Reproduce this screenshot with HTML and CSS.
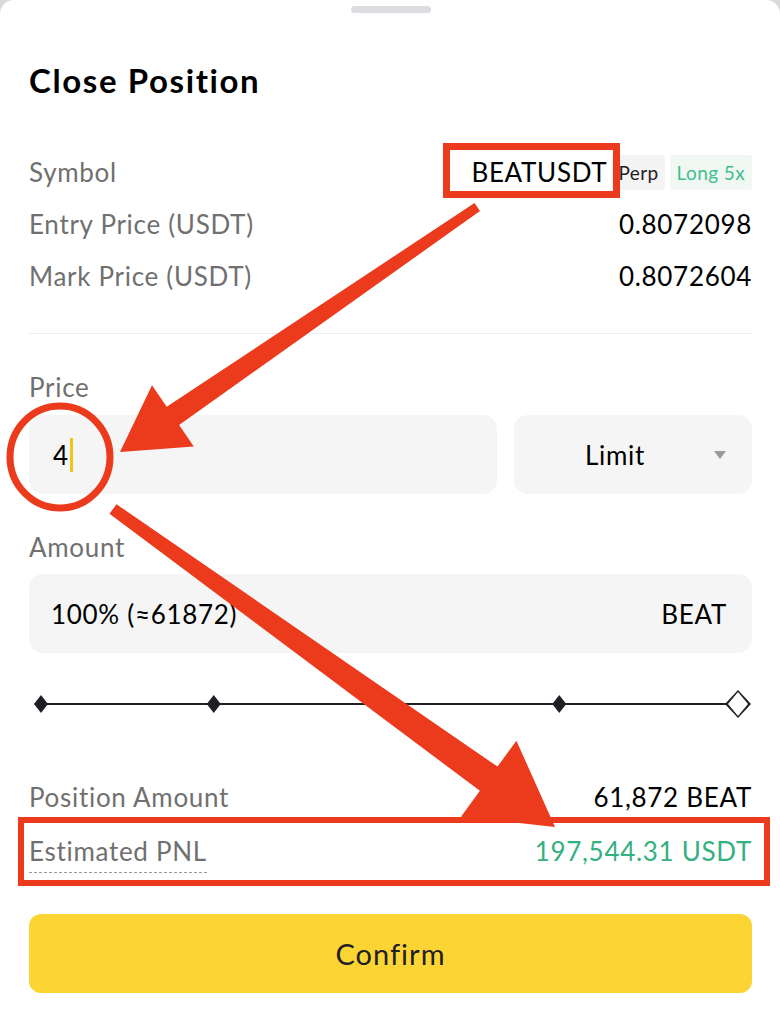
FILE: index.html
```html
<!DOCTYPE html>
<html lang="en">
<head>
  <meta charset="UTF-8">
  <title>Close Position</title>
  <link rel="stylesheet" href="styles.css">
</head>
<body>
  <div class="sheet">
    <div class="grabber"></div>
    <h1 class="title">Close Position</h1>

    <div class="row">
      <span class="label">Symbol</span>
      <span class="symbol">
        <span class="value">BEATUSDT</span>
        <span class="tag">Perp</span>
        <span class="tag tag-long">Long 5x</span>
      </span>
    </div>
    <div class="row">
      <span class="label">Entry Price (USDT)</span>
      <span class="value">0.8072098</span>
    </div>
    <div class="row">
      <span class="label">Mark Price (USDT)</span>
      <span class="value">0.8072604</span>
    </div>

    <div class="divider"></div>

    <div class="field-label">Price</div>
    <div class="price-row">
      <div class="input price-input">
        <span class="value">4</span><span class="caret"></span>
      </div>
      <div class="input select">
        <span class="value">Limit</span>
        <span class="arrow-down"></span>
      </div>
    </div>

    <div class="field-label">Amount</div>
    <div class="input amount-input">
      <span class="value">100% (≈61872)</span>
      <span class="value">BEAT</span>
    </div>

    <div class="slider">
      <div class="track"></div>
      <span class="mark"></span>
      <span class="mark"></span>
      <span class="mark"></span>
      <span class="mark"></span>
      <span class="mark mark-end"></span>
    </div>

    <div class="summary">
      <div class="row">
        <span class="label">Position Amount</span>
        <span class="value">61,872 BEAT</span>
      </div>
      <div class="row">
        <span class="label label-dotted">Estimated PNL</span>
        <span class="value value-green">197,544.31 USDT</span>
      </div>
    </div>

    <button class="confirm">Confirm</button>

    <!-- annotation layer drawn over the screenshot -->
    <svg class="marks" width="780" height="1024" viewBox="0 0 780 1024">
      <rect x="446.5" y="146.5" width="170" height="48" fill="none" stroke="#eb3b1c" stroke-width="7"/>
      <ellipse cx="60" cy="457" rx="50" ry="51" fill="none" stroke="#eb3b1c" stroke-width="7"/>
      <rect x="21" y="820" width="746" height="63" fill="none" stroke="#eb3b1c" stroke-width="6"/>
      <polygon fill="#eb3b1c" points="474.5,203 166.7,406.8 152,385.3 120,452 193.8,446.5 179.1,425 480,211"/>
      <polygon fill="#eb3b1c" points="116.5,504.2 497.5,766.6 516.4,740.7 555,827 461,816.7 479.9,790.8 109.5,513.8"/>
    </svg>
  </div>
</body>
</html>
```

FILE: styles.css
```css
body {
  margin: 0;
  background: #d9d9d9;
  font-family: 'Lato', 'Liberation Sans', sans-serif;
  color: #1e2026;
}

.sheet {
  position: relative;
  width: 780px;
  height: 1024px;
  box-sizing: border-box;
  padding: 0 28px 0 29px;
  background: #fff;
  border-radius: 14px 14px 0 0;
  overflow: hidden;
}

.grabber {
  width: 80px;
  height: 7px;
  margin: 6px auto 0;
  background: #dcdde0;
  border-radius: 4px;
}

.title {
  margin: 41px 0 0;
  height: 52px;
  line-height: 52px;
  font-size: 33px;
  font-weight: 700;
  letter-spacing: 1.6px;
  color: #000;
}

.row {
  display: flex;
  justify-content: space-between;
  align-items: center;
  height: 52px;
}

.title + .row {
  margin-top: 40px;
}

.label {
  font-size: 26px;
  letter-spacing: 0.7px;
  color: #707070;
}

.value {
  font-size: 26px;
  letter-spacing: 0.7px;
  color: #000;
}

.symbol {
  display: flex;
  align-items: center;
}

.symbol .value {
  margin-right: 5px;
}

.tag {
  display: inline-block;
  height: 35px;
  line-height: 35px;
  padding: 0 6px;
  font-size: 19px;
  letter-spacing: 0.4px;
  background: #f4f4f4;
  border-radius: 3px;
  color: #1e2026;
}

.tag-long {
  margin-left: 5px;
  padding: 0 7px;
  color: #3fbf8f;
  background: #f1f8f4;
}

.divider {
  height: 1px;
  margin-top: 31px;
  background: #ececec;
}

.field-label {
  height: 36px;
  line-height: 36px;
  margin-top: 35px;
  font-size: 26px;
  letter-spacing: 0.7px;
  color: #707070;
}

.field-label + .input {
  margin-top: 9px;
}

.price-row {
  display: flex;
  gap: 17px;
  margin-top: 10px;
}

.input {
  display: flex;
  align-items: center;
  height: 79px;
  box-sizing: border-box;
  background: #f5f5f5;
  border-radius: 14px;
}

.price-input {
  flex: 1;
  padding-left: 24px;
}

.caret {
  width: 3px;
  height: 34px;
  margin-left: 1px;
  background: #f0c419;
}

.select {
  width: 238px;
  padding: 0 26px 0 71px;
  justify-content: space-between;
}

.arrow-down {
  width: 0;
  height: 0;
  border-left: 6px solid transparent;
  border-right: 6px solid transparent;
  border-top: 8px solid #9a9a9a;
}

.amount-input {
  justify-content: space-between;
  padding: 0 25px 0 22px;
}

.slider {
  position: relative;
  display: flex;
  justify-content: space-between;
  align-items: center;
  height: 40px;
  margin: 31px 1px 0 5px;
}

.track {
  position: absolute;
  left: 6px;
  right: 12px;
  top: 19px;
  height: 2px;
  background: #1e2026;
}

.mark {
  position: relative;
  width: 14px;
  height: 18px;
  background: #1e2026;
  clip-path: polygon(50% 0, 100% 50%, 50% 100%, 0 50%);
}

.mark-end {
  width: 26px;
  height: 28px;
  background: #1e2026;
}

.mark-end::after {
  content: "";
  position: absolute;
  inset: 2px 3px;
  background: #fff;
  clip-path: polygon(50% 0, 100% 50%, 50% 100%, 0 50%);
}

.summary {
  margin-top: 47px;
}

.summary .row + .row {
  margin-top: 2px;
}

.label-dotted {
  position: relative;
}

.label-dotted::after {
  content: "";
  position: absolute;
  left: 0;
  right: 0;
  bottom: -6px;
  border-bottom: 1px dashed #9a9a9a;
}

.value-green {
  color: #35b07f;
}

.confirm {
  display: block;
  width: 100%;
  height: 79px;
  margin-top: 37px;
  border: none;
  border-radius: 12px;
  background: #fcd535;
  font-family: inherit;
  font-size: 29px;
  letter-spacing: 1px;
  color: #1e2026;
}

.marks {
  position: absolute;
  left: 0;
  top: 0;
  pointer-events: none;
}
```
